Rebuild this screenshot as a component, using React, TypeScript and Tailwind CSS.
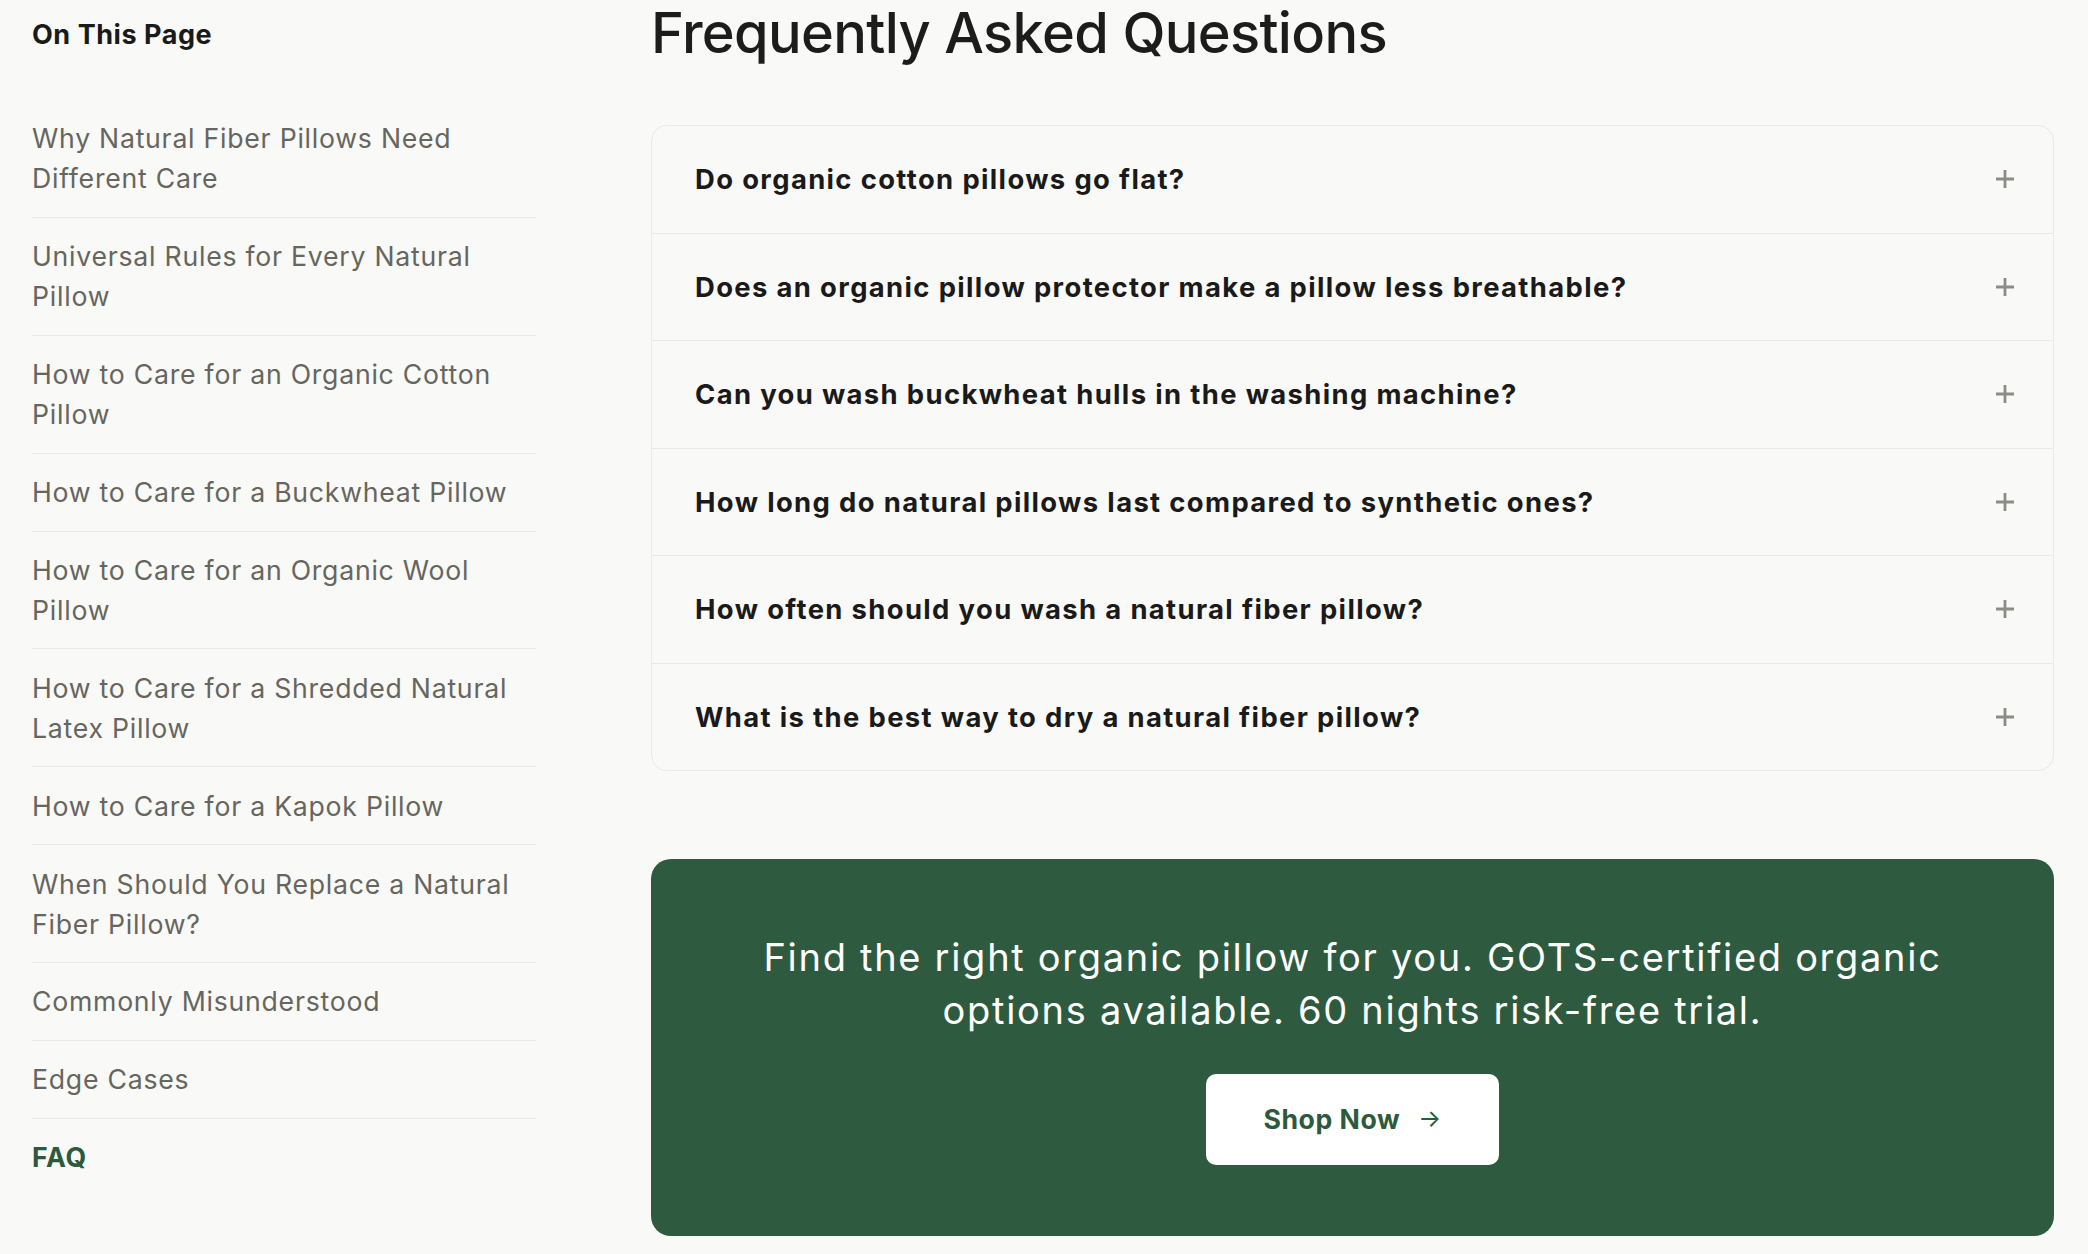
import React from 'react';

const tocItems = [
  'Why Natural Fiber Pillows Need Different Care',
  'Universal Rules for Every Natural Pillow',
  'How to Care for an Organic Cotton Pillow',
  'How to Care for a Buckwheat Pillow',
  'How to Care for an Organic Wool Pillow',
  'How to Care for a Shredded Natural Latex Pillow',
  'How to Care for a Kapok Pillow',
  'When Should You Replace a Natural Fiber Pillow?',
  'Commonly Misunderstood',
  'Edge Cases',
];

const questions = [
  'Do organic cotton pillows go flat?',
  'Does an organic pillow protector make a pillow less breathable?',
  'Can you wash buckwheat hulls in the washing machine?',
  'How long do natural pillows last compared to synthetic ones?',
  'How often should you wash a natural fiber pillow?',
  'What is the best way to dry a natural fiber pillow?',
];

const PlusIcon: React.FC = () => (
  <svg width="18" height="18" viewBox="0 0 18 18" className="shrink-0">
    <path d="M9 0v18M0 9h18" stroke="#8c8c86" strokeWidth="2.8" />
  </svg>
);

const App: React.FC = () => {
  return (
    <div className="min-h-screen w-[2088px] bg-[#f9f9f7] font-['Inter',sans-serif] text-[#1c1c1a]">
      <div className="flex gap-[115px] pl-[32px]">
        {/* Sidebar */}
        <aside className="w-[504px] shrink-0 pt-[15px]">
          <h3 className="text-[27px] font-bold leading-[40px] tracking-[0.02em] text-[#1a1a1a]">On This Page</h3>
          <ul className="mt-[45px]">
            {tocItems.map((item) => (
              <li
                key={item}
                className="border-b border-[#ebe9e5] py-[18.45px] text-[26.67px] leading-[40px] tracking-[0.028em] text-[#66665e]"
              >
                {item}
              </li>
            ))}
            <li className="py-[18.45px] text-[26.67px] font-bold leading-[40px] tracking-[0.03em] text-[#2d5a3d]">FAQ</li>
          </ul>
        </aside>

        {/* Main */}
        <main className="w-[1403px] shrink-0 pt-[5px]">
          <h2 className="text-[56px] font-medium leading-[56px] tracking-[-0.012em] text-[#1c1c1a]">
            Frequently Asked Questions
          </h2>

          <div className="mt-[64px] overflow-hidden rounded-[16px] border border-[#ebe9e5]">
            {questions.map((q, i) => (
              <div
                key={q}
                className={`flex items-center justify-between py-[33.25px] pl-[43px] pr-[39px] ${i > 0 ? 'border-t border-[#ebe9e5]' : ''}`}
              >
                <span className="text-[27.4px] font-bold leading-[40px] tracking-[0.05em] text-[#1a1a1a]">{q}</span>
                <PlusIcon />
              </div>
            ))}
          </div>

          <div className="mt-[88px] flex flex-col items-center rounded-[20px] bg-[#2e5a40] pt-[72px] pb-[71px] text-center">
            <p className="text-[38px] leading-[53.33px] tracking-[0.045em] text-white">
              Find the right organic pillow for you. GOTS-certified organic
              <br />
              options available. 60 nights risk-free trial.
            </p>
            <button className="mt-[36px] flex h-[91px] w-[293px] items-center justify-center gap-[18px] rounded-[10px] bg-white text-[26.67px] font-bold tracking-[0.02em] text-[#2d5a3d]">
              <span>Shop Now</span>
              <span className="text-[24px] font-normal">→</span>
            </button>
          </div>
        </main>
      </div>
    </div>
  );
};

export default App;
